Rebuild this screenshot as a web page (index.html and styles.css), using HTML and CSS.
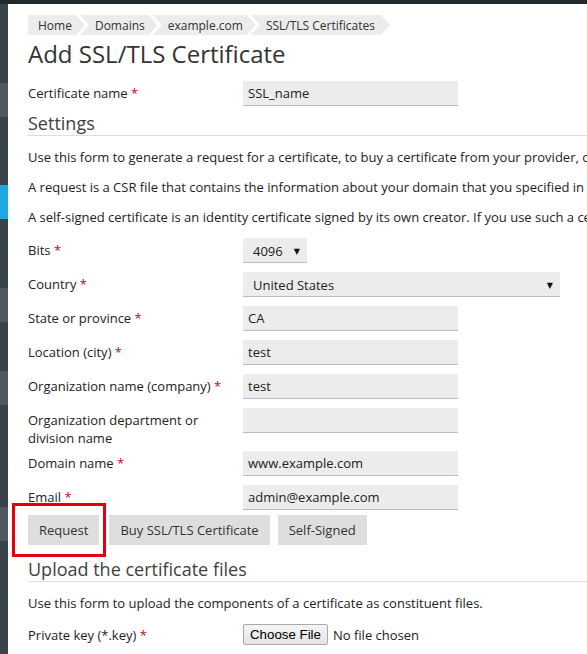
FILE: index.html
```html
<!DOCTYPE html>
<html lang="en">
<head>
<meta charset="utf-8">
<title>Add SSL/TLS Certificate</title>
<link rel="stylesheet" href="styles.css">
</head>
<body>
<div class="topbar"></div>
<div class="layout">
  <nav class="sidebar">
    <div class="seg dark"></div>
    <div class="seg light"></div>
    <div class="seg dark"></div>
    <div class="seg blue"></div>
    <div class="seg dark"></div>
    <div class="seg light"></div>
    <div class="seg dark"></div>
    <div class="seg light"></div>
    <div class="seg dark"></div>
    <div class="seg light"></div>
    <div class="seg dark"></div>
  </nav>
  <main class="main">
    <ol class="breadcrumb">
      <li class="crumb first">Home</li>
      <li class="crumb">Domains</li>
      <li class="crumb">example.com</li>
      <li class="crumb">SSL/TLS Certificates</li>
    </ol>
    <h1 class="page-title">Add SSL/TLS Certificate</h1>

    <div class="rows">
      <div class="form-row">
        <div class="label">Certificate name <span class="req">*</span></div>
        <div class="input">SSL_name</div>
      </div>
    </div>

    <h2 class="section-title">Settings</h2>
    <div class="desc">
      <p>Use this form to generate a request for a certificate, to buy a certificate from your provider, or to generate a self-signed certificate.</p>
      <p>A request is a CSR file that contains the information about your domain that you specified in the form.</p>
      <p>A self-signed certificate is an identity certificate signed by its own creator. If you use such a certificate, visitors will see a warning.</p>
    </div>

    <div class="rows settings-rows">
      <div class="form-row">
        <div class="label">Bits <span class="req">*</span></div>
        <div class="select bits"><span>4096</span><span class="arrow">&#9660;</span></div>
      </div>
      <div class="form-row">
        <div class="label">Country <span class="req">*</span></div>
        <div class="select country"><span>United States</span><span class="arrow">&#9660;</span></div>
      </div>
      <div class="form-row">
        <div class="label">State or province <span class="req">*</span></div>
        <div class="input">CA</div>
      </div>
      <div class="form-row">
        <div class="label">Location (city) <span class="req">*</span></div>
        <div class="input">test</div>
      </div>
      <div class="form-row">
        <div class="label">Organization name (company) <span class="req">*</span></div>
        <div class="input">test</div>
      </div>
      <div class="form-row">
        <div class="label">Organization department or division name</div>
        <div class="input"></div>
      </div>
      <div class="form-row">
        <div class="label">Domain name <span class="req">*</span></div>
        <div class="input">www.example.com</div>
      </div>
      <div class="form-row">
        <div class="label">Email <span class="req">*</span></div>
        <div class="input">admin@example.com</div>
      </div>
    </div>

    <div class="buttons">
      <button class="btn highlighted">Request</button>
      <button class="btn">Buy SSL/TLS Certificate</button>
      <button class="btn">Self-Signed</button>
    </div>

    <h2 class="section-title upload">Upload the certificate files</h2>
    <div class="desc">
      <p>Use this form to upload the components of a certificate as constituent files.</p>
    </div>
    <div class="rows upload-rows">
      <div class="form-row file-row">
        <div class="label">Private key (*.key) <span class="req">*</span></div>
        <div class="file"><span class="file-btn">Choose File</span><span class="file-name">No file chosen</span></div>
      </div>
    </div>
  </main>
</div>
</body>
</html>
```
FILE: styles.css
```css
html, body {
  margin: 0;
  padding: 0;
  background: #ffffff;
}
body {
  font-family: "Open Sans", "DejaVu Sans", sans-serif;
  font-size: 13px;
  color: #333333;
  width: 587px;
  height: 654px;
  overflow: hidden;
}
.topbar {
  height: 4px;
  background: #22292f;
}
.layout {
  display: flex;
  height: 650px;
}
.sidebar {
  width: 8px;
  flex: 0 0 8px;
  display: grid;
  grid-template-rows: 79px 34px 68px 34px 69px 34px 49px 34px 102px 34px 1fr;
}
.seg.dark { background: #39434b; }
.seg.light { background: #4f585f; }
.seg.blue { background: #1ea7e1; }

.main {
  flex: 1;
  min-width: 0;
  overflow: hidden;
  padding: 11px 0 0 20px;
}

.breadcrumb {
  display: flex;
  list-style: none;
  margin: 0;
  padding: 0;
  height: 20px;
  font-size: 12px;
}
.crumb {
  background: #ececec;
  height: 20px;
  line-height: 21px;
  padding: 0 13px 0 15px;
  margin-left: -5px;
  white-space: nowrap;
  clip-path: polygon(0 0, calc(100% - 9px) 0, 100% 50%, calc(100% - 9px) 100%, 0 100%, 9px 50%);
}
.crumb.first {
  margin-left: 0;
  padding-left: 10px;
  clip-path: polygon(0 0, calc(100% - 9px) 0, 100% 50%, calc(100% - 9px) 100%, 0 100%);
}
.crumb:last-child {
  padding-right: 15px;
}

.page-title {
  font-size: 24px;
  font-weight: 400;
  line-height: 28px;
  margin: 5px 0 13px;
  color: #333333;
}

.form-row {
  display: grid;
  grid-template-columns: 215px auto;
  align-items: start;
  min-height: 34px;
}
.form-row:last-child {
  min-height: 30px;
}
.label {
  padding: 3px 15px 4px 0;
  line-height: 18px;
  color: #222222;
}
.req {
  color: #d0021b;
}
.input {
  width: 215px;
  height: 25px;
  box-sizing: border-box;
  background: #ececec;
  border-bottom: 1px solid #b4bec8;
  padding: 0 5px;
  line-height: 24px;
  color: #222222;
}
.select {
  height: 25px;
  box-sizing: border-box;
  background: #ececec;
  border-bottom: 1px solid #b4bec8;
  padding: 1px 7px 0 10px;
  display: flex;
  justify-content: space-between;
  align-items: center;
  color: #222222;
}
.select.bits { width: 64px; }
.select.country { width: 317px; }
.arrow {
  font-size: 8px;
  color: #111111;
  line-height: 1;
}

.section-title {
  font-size: 18px;
  font-weight: 400;
  line-height: 22px;
  margin: 1px 0 0;
  padding-bottom: 1px;
  border-bottom: 1px solid #dddddd;
  color: #3f3f3f;
}
.section-title.upload {
  margin-top: 13px;
}
.desc p {
  margin: 12px 0 0;
  line-height: 18px;
  white-space: nowrap;
  color: #222222;
}
.settings-rows,
.upload-rows {
  margin-top: 12px;
}

.buttons {
  display: flex;
  gap: 8px;
}
.btn {
  font-family: "Open Sans", "DejaVu Sans", sans-serif;
  font-size: 13px;
  color: #333333;
  background: #dedede;
  border: none;
  height: 30px;
  padding: 0 11px;
  margin: 0;
}
.highlighted {
  position: relative;
  margin-right: 2px;
}
.highlighted::after {
  content: "";
  position: absolute;
  left: -16px;
  top: -12px;
  width: 94px;
  height: 54px;
  border: 3px solid #e3000f;
  box-sizing: border-box;
}

.form-row.file-row {
  align-items: center;
  min-height: 0;
}
.file-row .label {
  padding: 0;
}
.file {
  display: flex;
  align-items: center;
  gap: 5px;
}
.file-btn {
  font-family: "Liberation Sans", Arial, sans-serif;
  font-size: 13.3px;
  color: #000000;
  height: 21px;
  box-sizing: border-box;
  padding: 0 6px;
  line-height: 19px;
  border: 1px solid #a9a9a9;
  border-radius: 2px;
  background: linear-gradient(#f5f5f5, #e3e3e3);
}
.file-name {
  color: #222222;
}
```
